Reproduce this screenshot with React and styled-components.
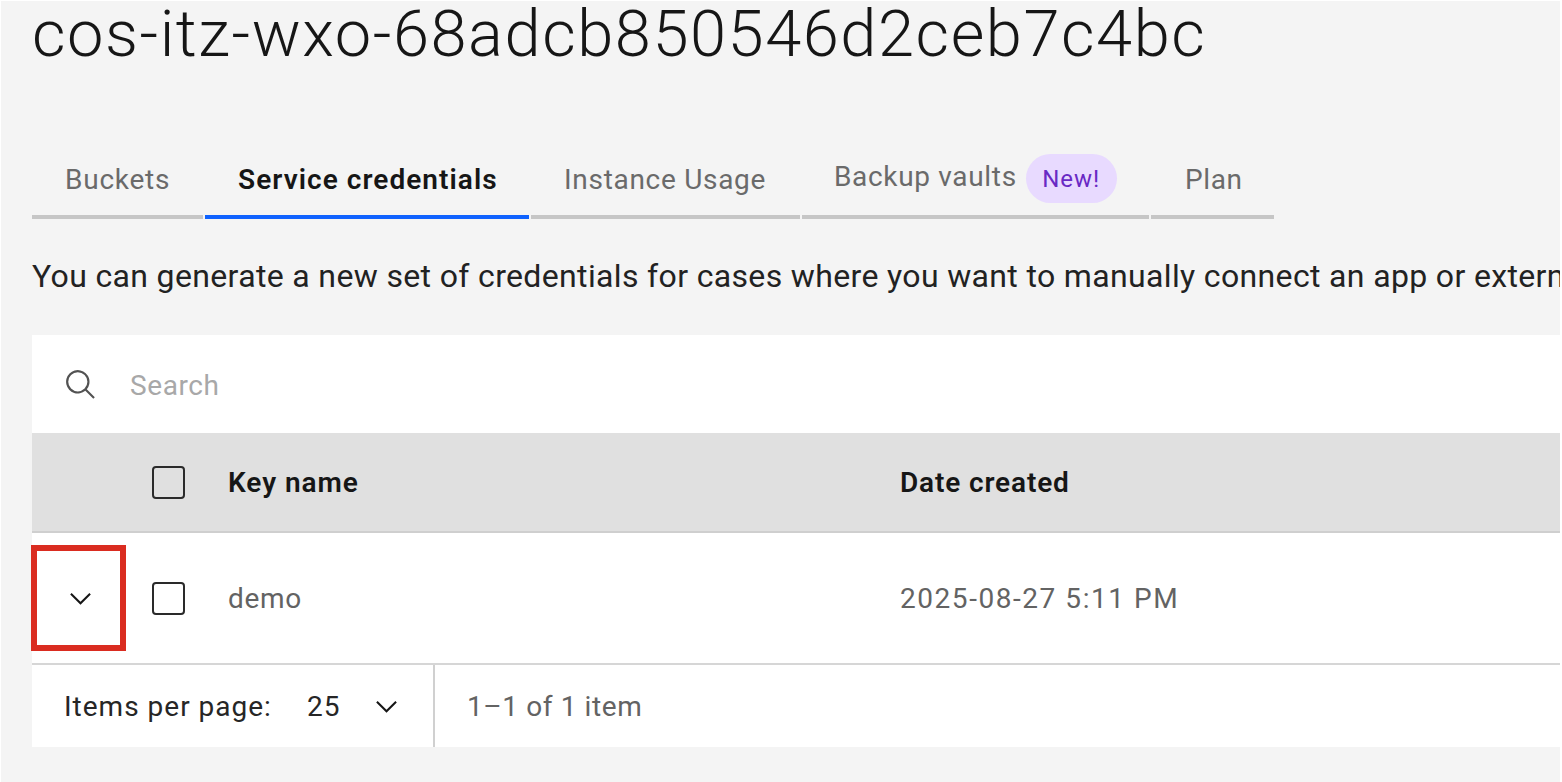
import React from "react";
import styled, { createGlobalStyle } from "styled-components";

const GlobalStyle = createGlobalStyle`
  *, *::before, *::after { box-sizing: border-box; }
  html, body { margin: 0; padding: 0; background: #ffffff; overflow: hidden; }
  body { font-family: Roboto, "Liberation Sans", sans-serif; }
`;

const Page = styled.main`
  width: 1559px;
  height: 781px;
  margin: 1px 0 0 1px;
  padding-left: 31px;
  background: #f4f4f4;
  color: #161616;
  overflow: hidden;
`;

const Label = styled.span`
  font-size: ${(p) => p.$size || 28}px;
  font-weight: ${(p) => (p.$bold ? 600 : 400)};
  color: ${(p) => p.$color || "#161616"};
  letter-spacing: ${(p) => p.$track || 0}px;
  white-space: nowrap;
`;

const Title = styled.h1`
  margin: 0;
  font-size: 65px;
  line-height: 67px;
  font-weight: 300;
  letter-spacing: 1.54px;
  white-space: nowrap;
`;

const Tabs = styled.nav`
  display: flex;
  gap: 2px;
  margin-top: 71px;
`;

const Tab = styled.div`
  display: flex;
  align-items: center;
  width: ${(p) => p.$width}px;
  height: 80px;
  padding: 4px 0 0 ${(p) => p.$inset || 33}px;
  border-bottom: 4px solid ${(p) => (p.$active ? "#0f62fe" : "#c6c6c6")};
`;

const RaisedLabel = styled(Label)`
  padding-bottom: 5px;
`;

const Badge = styled.span`
  display: flex;
  align-items: center;
  justify-content: center;
  width: 91px;
  height: 49px;
  margin: 0 0 1px 9px;
  border-radius: 25px;
  background: #e8daff;
`;

const Description = styled.p`
  margin: 37px 0 38px;
  height: 41px;
  font-size: 32px;
  line-height: 41px;
  letter-spacing: 0.35px;
  color: #222222;
  white-space: nowrap;
`;

const Table = styled.section`
  background: #ffffff;
`;

const SearchBar = styled.div`
  display: flex;
  align-items: center;
  gap: 32px;
  height: 98px;
  padding: 2px 0 0 32px;
`;

const Row = styled.div`
  position: relative;
  display: grid;
  grid-template-columns: 120px 76px 672px 1fr;
  align-items: center;
  height: ${(p) => (p.$header ? 100 : 132)}px;
  background: ${(p) => (p.$header ? "#e0e0e0" : "#ffffff")};
  border-bottom: 2px solid ${(p) => (p.$header ? "#cfcfcf" : "#d6d6d6")};
`;

const ExpandCell = styled.div`
  display: flex;
  padding-left: 32px;
`;

const Checkbox = styled.div`
  width: 33px;
  height: 33px;
  border: 2px solid #2a2a2a;
  border-radius: 4px;
`;

const Highlight = styled.div`
  position: absolute;
  left: -1px;
  top: 12px;
  width: 95px;
  height: 106px;
  border: 6px solid #da2c20;
`;

const Pagination = styled.footer`
  display: flex;
  height: 82px;
`;

const PageSize = styled.div`
  display: flex;
  align-items: center;
  width: 403px;
  padding-left: 32px;
  border-right: 2px solid #d0d0d0;
`;

const SizeValue = styled.div`
  display: flex;
  align-items: center;
  justify-content: space-between;
  width: 96px;
  margin-left: auto;
  margin-right: 30px;
`;

const Range = styled.div`
  display: flex;
  align-items: center;
  padding-left: 32px;
`;

const SearchIcon = () => (
  <svg width="34" height="34" viewBox="0 0 32 32" fill="#525252">
    <path d="M29,27.5859l-7.5521-7.5521a11.0177,11.0177,0,1,0-1.4141,1.4141L27.5859,29ZM4,13a9,9,0,1,1,9,9A9.01,9.01,0,0,1,4,13Z" />
  </svg>
);

const ChevronDown = () => (
  <svg width="33" height="33" viewBox="0 0 16 16" fill="#161616">
    <path d="M8 11 3 6l.7-.7L8 9.6l4.3-4.3.7.7z" />
  </svg>
);

export default function App() {
  return (
    <>
      <GlobalStyle />
      <Page>
        <Title>cos-itz-wxo-68adcb850546d2ceb7c4bc</Title>
        <Tabs>
          <Tab $width={171}><Label $color="#6a6a6a" $track={0.75}>Buckets</Label></Tab>
          <Tab $width={324} $active><Label $bold $track={1.05}>Service credentials</Label></Tab>
          <Tab $width={269}><Label $color="#6a6a6a" $track={0.7}>Instance Usage</Label></Tab>
          <Tab $width={347} $inset={32}>
            <RaisedLabel $color="#6a6a6a" $track={0.67}>Backup vaults</RaisedLabel>
            <Badge><Label $size={24} $color="#6929c4" $track={1}>New!</Label></Badge>
          </Tab>
          <Tab $width={123} $inset={34}><Label $color="#6a6a6a" $track={0.6}>Plan</Label></Tab>
        </Tabs>
        <Description>
          You can generate a new set of credentials for cases where you want to manually connect an app or external
        </Description>
        <Table>
          <SearchBar>
            <SearchIcon />
            <Label $color="#a8a8a8" $track={0.6}>Search</Label>
          </SearchBar>
          <Row $header>
            <span />
            <Checkbox />
            <Label $bold $track={0.95}>Key name</Label>
            <Label $bold $track={0.85}>Date created</Label>
          </Row>
          <Row>
            <ExpandCell><ChevronDown /></ExpandCell>
            <Checkbox />
            <Label $color="#636363" $track={0.7}>demo</Label>
            <Label $color="#636363" $track={1.55}>2025-08-27 5:11 PM</Label>
            <Highlight />
          </Row>
          <Pagination>
            <PageSize>
              <Label $color="#262626" $track={1}>Items per page:</Label>
              <SizeValue>
                <Label $color="#262626" $track={1}>25</Label>
                <ChevronDown />
              </SizeValue>
            </PageSize>
            <Range><Label $color="#636363" $track={0.6}>1–1 of 1 item</Label></Range>
          </Pagination>
        </Table>
      </Page>
    </>
  );
}
